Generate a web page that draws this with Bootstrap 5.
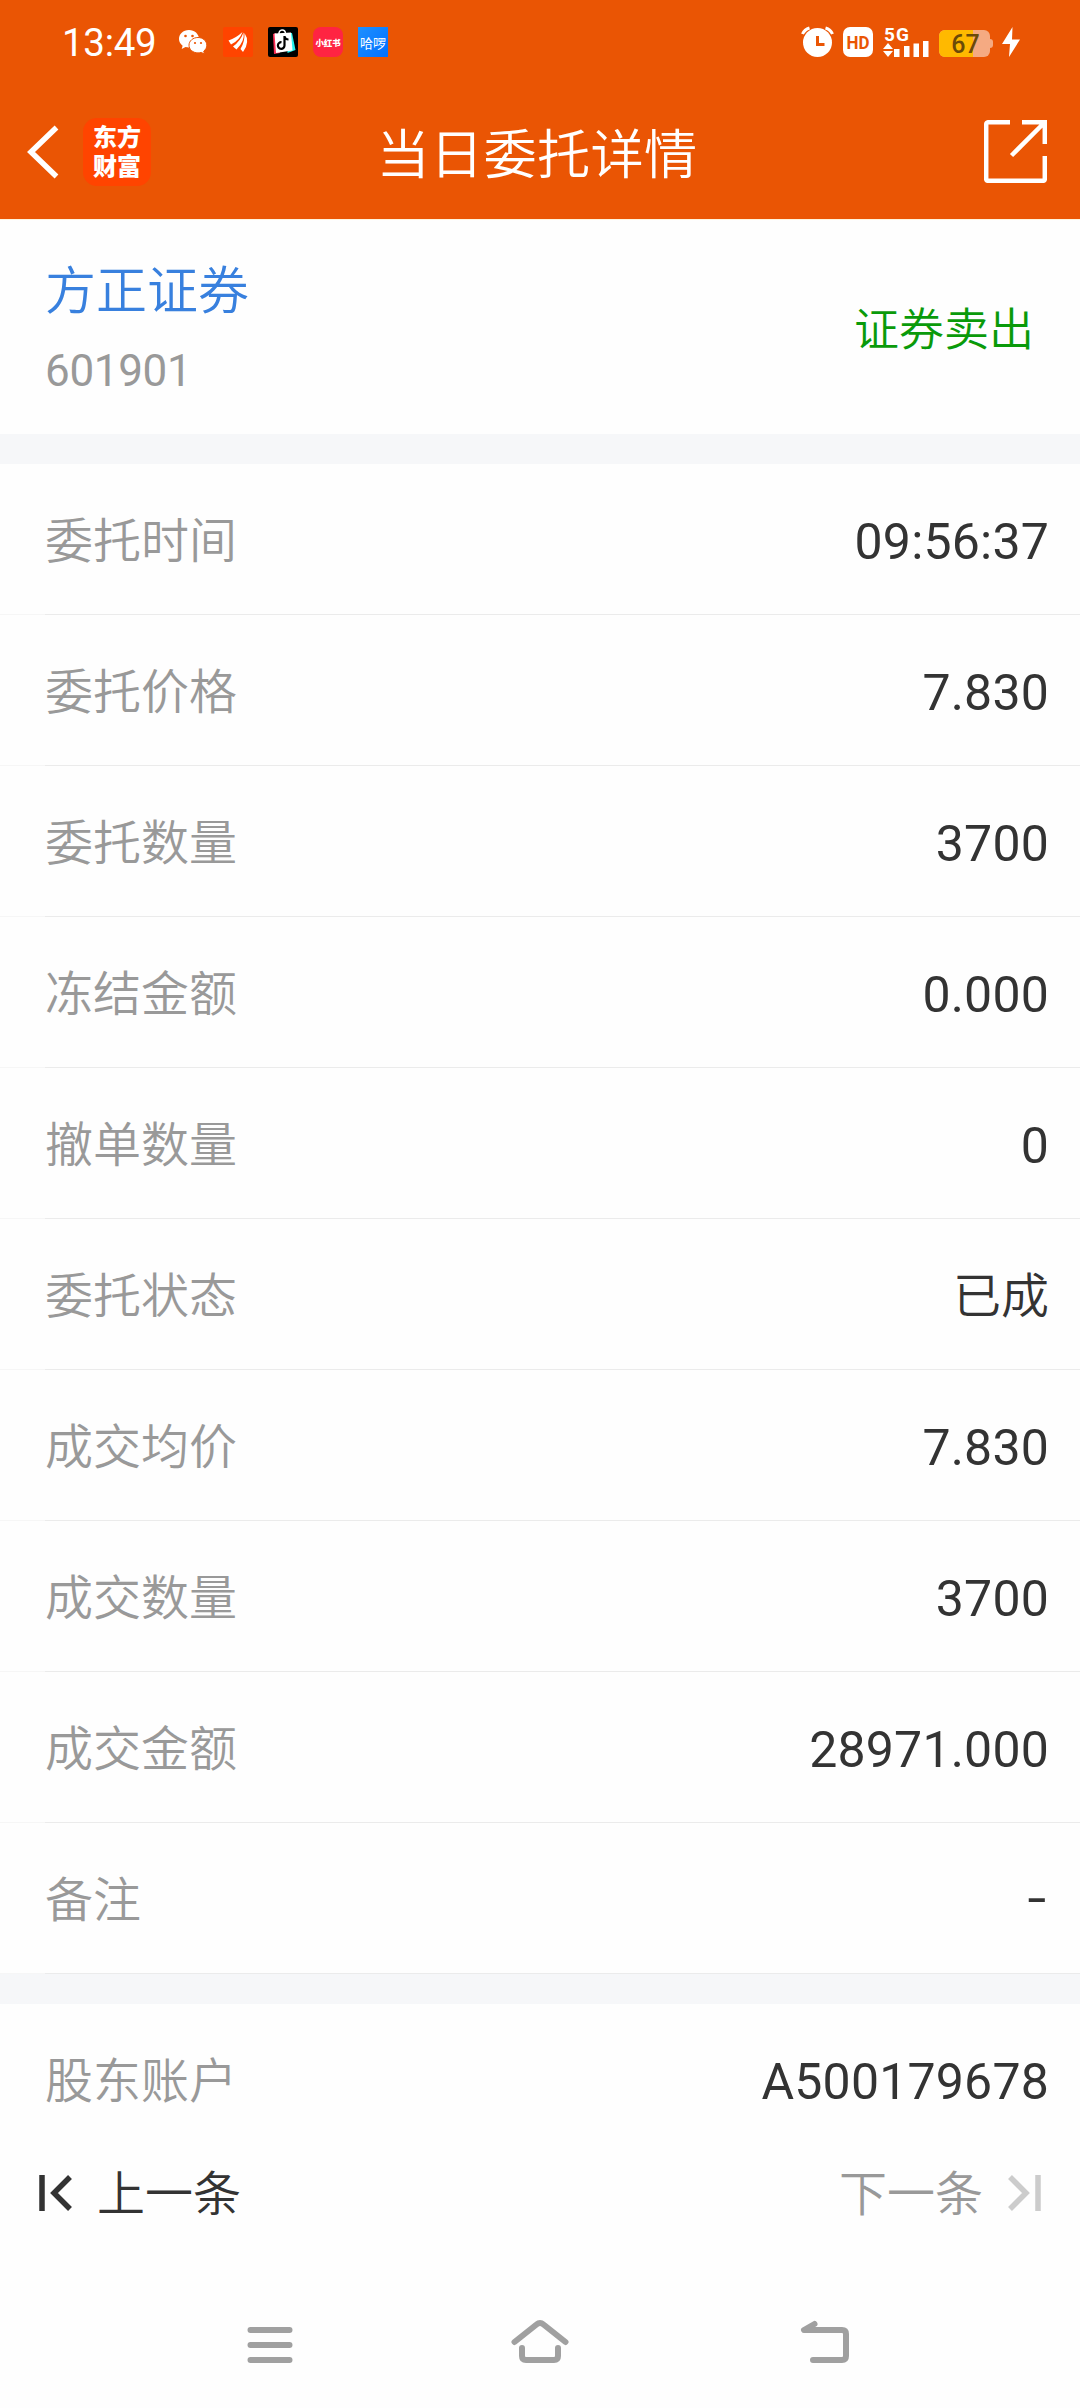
<!DOCTYPE html>
<html lang="zh-CN">
<head>
<meta charset="utf-8">
<meta name="viewport" content="width=device-width, initial-scale=1">
<title>当日委托详情</title>
<link rel="stylesheet" href="https://cdn.jsdelivr.net/npm/bootstrap@5.3.0/dist/css/bootstrap.min.css">
<style>
body{font-family:Roboto,"Noto Sans CJK SC",sans-serif;background:#fefefe;color:#333;line-height:1.2}
svg{display:block;flex:none}
.zh{font-family:"Noto Sans CJK SC",sans-serif;font-weight:350}
.top-bar{background:#ea5504;height:219px;color:#fff}
.status{height:84px;padding:0 60px 0 62px}
.clock{font-size:38.5px;width:116px;letter-spacing:-.3px;padding-top:3px}
.app-icons{gap:15px}
.mini{width:30px;height:30px;overflow:hidden;white-space:nowrap;font-family:"Noto Sans CJK SC",sans-serif;line-height:1}
.mini-xhs{background:#ff2442;border-radius:8px;font-size:8.5px;font-weight:900;letter-spacing:-.2px}
.mini-hello{background:linear-gradient(135deg,#1e90ff,#0070ff);font-size:13px}
.title-row{height:135px;padding:0 33px 0 27px}
.side{flex:1 1 0}
.logo{width:68px;height:68px;border-radius:14px;background:#ff4400;font:900 24px/29px "Noto Sans CJK SC",sans-serif;margin-left:24px;padding-bottom:4px}
.page-title{font-size:53.2px;letter-spacing:.3px;margin:0 0 2px;line-height:60px}
.summary{height:215px;padding:0 46px 0 45px;border-top:1px solid #fff3dc}
.stock-name{color:#3880de;font-size:51px;line-height:60px}
.stock-code{color:#999;font-size:44px;line-height:52px;letter-spacing:-.35px;margin-top:28px}
.side-sell{color:#0a9a0a;font-size:45px;line-height:54px}
.gap-strip{height:30px;background:#f6f7f9}
.item{height:151px;padding:0 31px 0 45px;font-size:48px;position:relative}
.item.lined::after{content:"";position:absolute;left:0;right:0;bottom:0;height:1px;background:linear-gradient(90deg,#f6f6f6 45px,#ebebeb 45px)}
.item .zh{line-height:60px;padding-bottom:5px}
.item .key{color:#999}
.num{font-size:50px;line-height:60px;letter-spacing:.2px;padding-top:4px}
.dash{transform:scaleX(1.35);transform-origin:right;padding:0 2px 2px 0}
.pager{height:76px;padding:0 38px;font-size:48px}
.pager .zh{padding-bottom:4px}
.pager .off{color:#999}
.sysnav{height:177px}
</style>
</head>
<body>
<header class="top-bar">
  <div class="status d-flex align-items-center justify-content-between">
    <div class="d-flex align-items-center">
      <div class="clock">13:49</div>
      <div class="app-icons d-flex align-items-center">
        <svg width="30" height="30" viewBox="0 0 30 30"><path fill="#fff" d="M11 3C5 3 1 7 1 12c0 3 1.400 5 3.600 6.700L3.700 22l3.800-2c1.200.3 2.300.5 3.500.5 5.500 0 10-3.900 10-8.700S16.500 3 11 3z"/><path fill="#fff" stroke="#ea5504" stroke-width="1" d="M20 10.500c-5 0-9 3.400-9 7.700s4 7.700 9 7.700c1.200 0 2.300-.2 3.300-.5l3.200 1.700-.8-2.900c2-1.500 3.100-3.600 3.100-6 0-4.300-3.900-7.700-8.800-7.700z"/><g fill="#ea5504"><circle cx="7.500" cy="9" r="1.300"/><circle cx="14.500" cy="9" r="1.300"/><circle cx="17" cy="16" r="1.100"/><circle cx="23" cy="16" r="1.100"/></g></svg>
        <svg width="30" height="30" viewBox="0 0 30 30"><rect width="30" height="30" rx="2" fill="#ff4400"/><path fill="#fff" d="M5.500 13.500Q13 11 19.500 5Q16.500 13.500 8 17.500zM10 19.500Q17.500 14 20.500 5.500Q22 14 13.500 22.500zM17.500 22Q22 14.500 21.500 6Q27.500 15 20 25z"/></svg>
        <svg width="30" height="30" viewBox="0 0 30 30"><rect width="30" height="30" rx="2" fill="#000"/><path d="M5 7l3-1 4 20-6 1z" fill="#fe2c55"/><path d="M20 6l4 0 3.500 17-8 3z" fill="#25f4ee"/><path d="M6.500 6.500L23 5.500l1.500 18L8 26z" fill="#fff"/><path d="M11 7c-.5-5 6-5.500 6.500-.5" fill="none" stroke="#fff" stroke-width="1.500"/><path d="M16.500 9v9.500a3.300 3.300 0 1 1-3-3.300M16.500 9.500c.5 2 2 3 4 3" fill="none" stroke="#000" stroke-width="2.200"/></svg>
        <div class="mini mini-xhs d-flex align-items-center justify-content-center">小红书</div>
        <div class="mini mini-hello d-flex align-items-center justify-content-center">哈啰</div>
      </div>
    </div>
    <svg width="219" height="44" viewBox="801 20 219 44">
      <g fill="#fff"><circle cx="817.500" cy="42.500" r="14.500"/><path d="M802.500 34q2-4.500 7-6M832.500 34q-2-4.500-7-6" fill="none" stroke="#fff" stroke-width="3"/>
      <rect x="843" y="27" width="30" height="30" rx="7"/></g>
      <path d="M817.500 36v8.500h7" fill="none" stroke="#ea5504" stroke-width="3"/>
      <text x="858" y="48.500" text-anchor="middle" font-family="Roboto" font-weight="700" font-size="18" textLength="23" lengthAdjust="spacingAndGlyphs" fill="#ea5504">HD</text>
      <text x="884" y="41" font-family="Roboto" font-weight="700" font-size="19" textLength="25" fill="#fff">5G</text>
      <path fill="#fff" d="M883 49l5-6 5 6zM883 51h10l-5 6zM894 49h5.500v8H894zM904 46h5.500v11H904zM913.500 43.500h5.500V57h-5.500zM923 41h5.500v16H923z"/>
      <clipPath id="cell"><rect x="939" y="30" width="51" height="27" rx="6"/></clipPath>
      <g clip-path="url(#cell)"><path fill="#f5aa82" d="M939 30h51v27h-51z"/><path fill="#ffb900" d="M939 30h34v27h-34z"/></g>
      <path fill="#f5aa82" d="M990 39q3 0 3 3v3q0 3-3 3z"/>
      <text x="965.500" y="52.500" text-anchor="middle" font-family="Roboto" font-weight="500" font-size="25" fill="#6b4a08">67</text>
      <path fill="#fff" d="M1012.500 27l-10.500 17h8l-1 13 11-17.500h-8z"/>
    </svg>
  </div>
  <div class="title-row d-flex align-items-center">
    <div class="side d-flex align-items-center">
      <svg width="32" height="54" viewBox="0 0 32 54"><path d="M29.500 2.500L4 27l25.500 24.500" fill="none" stroke="#fff" stroke-width="5.500"/></svg>
      <div class="logo text-center d-flex flex-column justify-content-center"><span>东方</span><span>财富</span></div>
    </div>
    <h1 class="page-title zh">当日委托详情</h1>
    <div class="side d-flex justify-content-end">
      <svg width="63" height="63" viewBox="0 0 63 63" fill="none" stroke="#fff" stroke-width="4.500"><path d="M26 2.200H4.500q-2.300 0-2.300 2.300v54q0 2.300 2.300 2.300h54q2.300 0 2.300-2.300V36M38 2.200h22.800V24M60.500 2.500L27.500 35.500"/></svg>
    </div>
  </div>
</header>
<main>
  <section class="summary d-flex align-items-center justify-content-between">
    <div><div class="stock-name zh">方正证券</div><div class="stock-code">601901</div></div>
    <div class="side-sell zh">证券卖出</div>
  </section>
  <div class="gap-strip"></div>
  <section>
    <div class="item lined d-flex align-items-center justify-content-between"><span class="key zh">委托时间</span><span class="num">09:56:37</span></div>
    <div class="item lined d-flex align-items-center justify-content-between"><span class="key zh">委托价格</span><span class="num">7.830</span></div>
    <div class="item lined d-flex align-items-center justify-content-between"><span class="key zh">委托数量</span><span class="num">3700</span></div>
    <div class="item lined d-flex align-items-center justify-content-between"><span class="key zh">冻结金额</span><span class="num">0.000</span></div>
    <div class="item lined d-flex align-items-center justify-content-between"><span class="key zh">撤单数量</span><span class="num">0</span></div>
    <div class="item lined d-flex align-items-center justify-content-between"><span class="key zh">委托状态</span><span class="zh">已成</span></div>
    <div class="item lined d-flex align-items-center justify-content-between"><span class="key zh">成交均价</span><span class="num">7.830</span></div>
    <div class="item lined d-flex align-items-center justify-content-between"><span class="key zh">成交数量</span><span class="num">3700</span></div>
    <div class="item lined d-flex align-items-center justify-content-between"><span class="key zh">成交金额</span><span class="num">28971.000</span></div>
    <div class="item lined d-flex align-items-center justify-content-between"><span class="key zh">备注</span><span class="num dash">-</span></div>
  </section>
  <div class="gap-strip"></div>
  <section>
    <div class="item d-flex align-items-center justify-content-between"><span class="key zh">股东账户</span><span class="num">A500179678</span></div>
  </section>
</main>
<footer>
  <div class="pager d-flex align-items-center justify-content-between">
    <div class="d-flex align-items-center">
      <svg width="35" height="36" viewBox="0 0 35 36"><path d="M4 0v36M32 2L16 18l16 16" fill="none" stroke="#333" stroke-width="5.500"/></svg>
      <span class="zh ms-4">上一条</span>
    </div>
    <div class="off d-flex align-items-center">
      <span class="zh me-4">下一条</span>
      <svg width="35" height="36" viewBox="0 0 35 36"><path d="M31 0v36M3 2l16 16L3 34" fill="none" stroke="#ccc" stroke-width="5.500"/></svg>
    </div>
  </div>
  <nav class="sysnav">
    <svg width="1080" height="177" viewBox="0 2231 1080 177" fill="none" stroke="#a0a0a0" stroke-width="6" stroke-linecap="round" stroke-linejoin="round"><path d="M250.500 2330h39M250.500 2345h39M250.500 2360h39"/><path d="M514.500 2342l22-17.500q3.500-3 7 0l22 17.500M522 2348v8q0 4 4 4h28q4 0 4-4v-8"/><path d="M814.500 2324l-10.500 6h38q4 0 4 4v22q0 4-4 4h-29"/></svg>
  </nav>
</footer>
<script src="https://cdn.jsdelivr.net/npm/bootstrap@5.3.0/dist/js/bootstrap.bundle.min.js"></script>
</body>
</html>
